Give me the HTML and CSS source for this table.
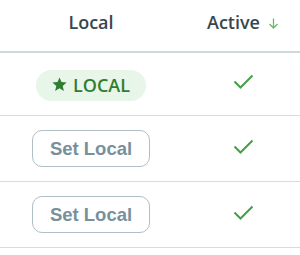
FILE: index.html
```html
<!DOCTYPE html>
<html>
<head>
<meta charset="utf-8">
<link rel="stylesheet" href="styles.css">
</head>
<body>
<div class="table">
  <div class="row head">
    <div class="cell">Local</div>
    <div class="cell">Active <span class="sort">
      <svg width="11" height="11" viewBox="0 0 11 11"><path d="M5.5 0.5V10M1.5 6L5.5 10L9.5 6" fill="none" stroke="#66bb6a" stroke-width="1.3"/></svg>
    </span></div>
  </div>
  <div class="row first">
    <div class="cell"><span class="badge">
      <svg class="star" width="17" height="17" viewBox="0 0 24 24"><path d="M12 17.27L18.18 21l-1.64-7.03L22 9.24l-7.19-.61L12 2 9.19 8.63 2 9.24l5.46 4.73L5.82 21z" fill="#2e7d32"/></svg>LOCAL</span></div>
    <div class="cell"><svg class="check" width="21" height="15" viewBox="0 0 21 15"><path d="M1.5 7.5L7.5 13.5L19.5 1.5" fill="none" stroke="#43a047" stroke-width="2"/></svg></div>
  </div>
  <div class="row">
    <div class="cell"><button class="btn">Set Local</button></div>
    <div class="cell"><svg class="check" width="21" height="15" viewBox="0 0 21 15"><path d="M1.5 7.5L7.5 13.5L19.5 1.5" fill="none" stroke="#43a047" stroke-width="2"/></svg></div>
  </div>
  <div class="row">
    <div class="cell"><button class="btn">Set Local</button></div>
    <div class="cell"><svg class="check" width="21" height="15" viewBox="0 0 21 15"><path d="M1.5 7.5L7.5 13.5L19.5 1.5" fill="none" stroke="#43a047" stroke-width="2"/></svg></div>
  </div>
</div>
</body>
</html>
```
FILE: styles.css
```css
html, body {
  margin: 0;
  padding: 0;
  background: #fff;
  overflow: hidden;
}
.table {
  width: 304px;
  font-family: "Open Sans", "Noto Sans", sans-serif;
}
.row {
  display: grid;
  grid-template-columns: 182px 122px;
  height: 65px;
  border-bottom: 1px solid #d5dde1;
  align-items: center;
}
.row.first {
  height: 62px;
}
.row.head {
  height: 51px;
  border-bottom: 2px solid #cfd8dc;
  align-items: start;
}
.cell {
  display: flex;
  justify-content: center;
  align-items: center;
}
.head .cell {
  padding-top: 9px;
  font-size: 18px;
  font-weight: 600;
  color: #37474f;
  line-height: 26px;
}
.sort {
  display: inline-flex;
  margin-left: 8px;
  padding-top: 2px;
}
.badge {
  display: inline-flex;
  align-items: center;
  gap: 5px;
  height: 31px;
  padding: 0 16px 0 15px;
  border-radius: 16px;
  background: #e8f5e9;
  color: #2e7d32;
  font-size: 18px;
  font-weight: 600;
  margin-top: 2px;
}
.star {
  display: block;
  margin-top: -1px;
}
.btn {
  height: 37px;
  padding: 0 17px;
  border: 1px solid #b0bec5;
  border-radius: 10px;
  background: #fff;
  color: #78909c;
  font-family: "Liberation Sans", Arial, sans-serif;
  font-weight: bold;
  font-size: 18.5px;
}
.check {
  display: block;
  margin-top: -5px;
}
```
